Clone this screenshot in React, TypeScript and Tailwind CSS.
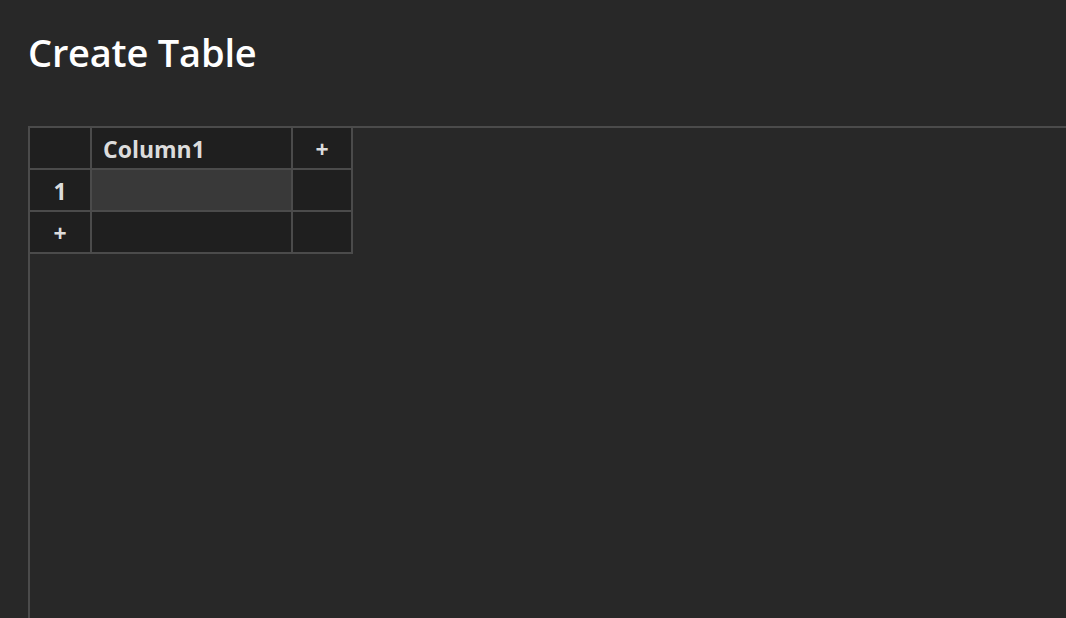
import React from "react";

const cell = "flex items-center bg-[#1f1f1f] pt-[3px] text-[23px] font-bold leading-none text-[#dcdcdc]";

export default function App() {
  return <div className="h-[618px] overflow-hidden bg-[#282828] pl-[28px] font-['Open_Sans','Noto_Sans',sans-serif]">
    <h1 className="pt-[28px] text-[38px] font-semibold leading-[48px] tracking-[-0.2px] text-white">Create Table</h1>
    <div className="mt-[50px] h-[600px] border-l-2 border-t-2 border-[#4b4b4b]">
      <div className="inline-grid grid-cols-[60px_199px_58px] grid-rows-[40px_40px_40px] gap-[2px] bg-[#4b4b4b] pr-[2px] pb-[2px]">
        <div className={cell} />
        <div className={`${cell} pl-[11px]`}>Column1</div>
        <div className={`${cell} justify-center`}>+</div>
        <div className={`${cell} justify-center`}>1</div>
        <div className="bg-[#393939]" />
        <div className={cell} />
        <div className={`${cell} justify-center`}>+</div>
        <div className={cell} />
        <div className={cell} />
      </div>
    </div>
  </div>;
}
